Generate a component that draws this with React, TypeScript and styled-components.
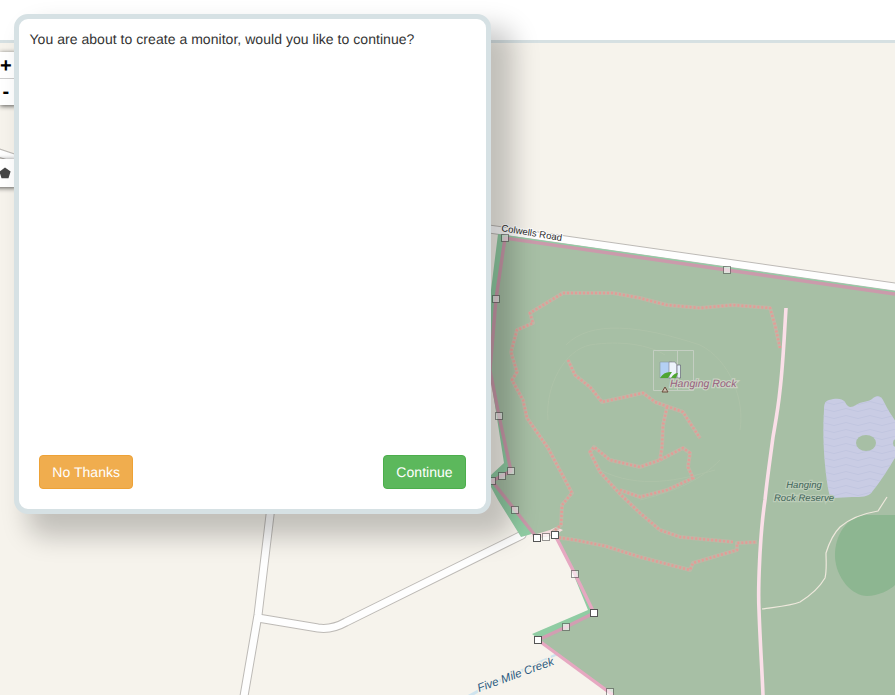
import styled, { createGlobalStyle } from 'styled-components';

const GlobalStyle = createGlobalStyle`
  html, body, #root {
    margin: 0;
    height: 100%;
  }
  body {
    font-family: "Liberation Sans", Arial, sans-serif;
    font-size: 14px;
    line-height: 20px;
    letter-spacing: 0.04px;
    color: #333;
    overflow: hidden;
    text-rendering: geometricPrecision;
  }
`;

type Point = [number, number];

const line = (pts: Point[]) => pts.map(([x, y], i) => `${i ? 'L' : 'M'}${x} ${y}`).join(' ');

const reservePts: Point[] = [
  [498, 234], [895, 291], [895, 695], [614, 695], [532, 634], [588, 610], [570, 566],
  [553, 528], [521, 537], [498, 500], [491, 487], [491, 475], [504, 463], [491, 380], [491, 290],
];

const areaPts: Point[] = [
  [505, 238], [727, 270], [895, 294], [895, 695], [613, 695], [538, 640], [566, 627], [594, 613],
  [575, 574], [555, 535], [537, 538], [515, 510], [492, 481], [511, 471], [499, 416], [490, 370], [496, 299],
];

const trails: Point[][] = [
  [
    [780, 348], [775, 325], [770, 308], [733, 305], [700, 308], [667, 305], [640, 298], [613, 293], [563, 293],
    [530, 313], [533, 323], [517, 330], [511, 352], [517, 372], [512, 380], [523, 400], [527, 418],
    [548, 448], [572, 493], [562, 505], [561, 525], [553, 532],
  ],
  [[555, 537], [575, 540], [605, 546], [640, 557], [690, 570], [693, 563], [737, 550], [737, 543], [757, 542]],
  [[733, 542], [680, 537], [660, 530], [640, 513], [620, 494], [600, 472], [590, 452], [594, 447], [610, 460], [640, 467], [660, 460], [683, 448], [690, 453], [688, 467], [693, 478], [667, 490], [640, 497], [620, 490]],
  [[568, 360], [575, 375], [590, 387], [602, 402], [643, 393], [655, 402], [683, 412], [690, 423], [700, 438]],
  [[667, 407], [663, 425], [662, 447], [660, 460]],
];

const contours: string[] = [
  'M548 420 C545 385 565 350 590 345 C620 340 650 345 665 355',
  'M566 345 C590 320 640 325 700 345 C730 360 745 400 740 430',
  'M600 470 C640 490 680 480 715 470',
  'M640 500 C680 490 700 480 720 460',
];

const roads: string[] = [
  'M-10 150 L14 158',
  'M440 222 L895 287',
  'M276 465 L258 615 L243 702',
  'M258 618 L318 628 Q332 630 346 622 L522 535',
];

const boundaries: { pts: Point[]; color: string }[] = [
  { pts: [[496, 299], [505, 238], [727, 270], [895, 294]], color: '#cb9aab' },
  { pts: [[496, 299], [490, 370], [499, 416], [511, 471], [492, 481], [515, 510], [537, 538]], color: '#cb9aab' },
  { pts: [[555, 535], [575, 574], [594, 613]], color: '#e6a8c1' },
  { pts: [[594, 613], [566, 627], [538, 640]], color: '#d29eb2' },
  { pts: [[538, 640], [613, 695]], color: '#e6a8c1' },
];

const handles: { x: number; y: number; mid: boolean }[] = [
  { x: 505, y: 238, mid: true },
  { x: 727, y: 270, mid: true },
  { x: 496, y: 299, mid: true },
  { x: 499, y: 416, mid: true },
  { x: 511, y: 471, mid: true },
  { x: 502, y: 476, mid: true },
  { x: 492, y: 481, mid: true },
  { x: 515, y: 510, mid: true },
  { x: 537, y: 538, mid: false },
  { x: 546, y: 537, mid: true },
  { x: 555, y: 535, mid: false },
  { x: 575, y: 574, mid: true },
  { x: 594, y: 613, mid: false },
  { x: 566, y: 627, mid: true },
  { x: 538, y: 640, mid: false },
  { x: 610, y: 692, mid: true },
];

const lakePath =
  'M829 400 C836 398 842 398 845 402 C848 408 851 408 856 405 C862 401 868 402 872 399 C877 394 882 396 884 402 C888 410 892 416 896 422 L896 456 C888 470 880 482 872 492 C868 497 862 497 852 497 L834 498 C830 498 829 494 828 488 C825 470 822 440 824 410 C824 404 825 401 829 400 Z';

const MapDrawing = () => (
  <MapSvg viewBox="0 43 895 652" preserveAspectRatio="none">
    <defs>
      <pattern id="lake" width="24" height="7" patternUnits="userSpaceOnUse">
        <path d="M0 4 Q6 1 12 4 T24 4" fill="none" stroke="#c1c5df" strokeWidth="1" />
      </pattern>
    </defs>

    {roads.map((d) => (
      <RoadCasing key={d} d={d} />
    ))}
    {roads.map((d) => (
      <RoadFill key={d} d={d} />
    ))}
    <path d="M462 700 L480 690 L560 653" fill="none" stroke="#cfe4ef" strokeWidth="3" />

    <path d={`${line(reservePts)} Z`} fill="#90cca3" />
    <path d={`${line(areaPts)} Z`} fill="#a7bfa5" />
    <path d="M530 536 L550 530 L556 527 L563 530 L555 535 L537 538 Z" fill="#f4dcdc" />

    <path d={lakePath} fill="#c9cce4" />
    <path d={lakePath} fill="url(#lake)" />
    <ellipse cx="866" cy="443" rx="10" ry="8" fill="#a7bfa5" />
    <ellipse cx="896" cy="443" rx="3" ry="4" fill="#a7bfa5" />
    <path d="M867 515 C848 515 834 535 835 557 C836 578 852 596 867 596 C878 596 890 590 895 585 L895 515 Z" fill="#8db691" />

    {contours.map((d) => (
      <path key={d} d={d} fill="none" stroke="#aec3a9" strokeWidth="1" />
    ))}

    {trails.map((pts) => (
      <g key={pts[0].join()}>
        <path d={line(pts)} fill="none" stroke="#c4b7a8" strokeWidth="4" strokeLinejoin="round" opacity="0.75" />
        <path d={line(pts)} fill="none" stroke="#e39c96" strokeWidth="2.6" strokeDasharray="2 2" />
      </g>
    ))}

    <path
      d="M786 308 C784 340 783 365 780 390 C778 410 775 425 773 437 C770 460 767 480 765 500 C762 520 761 535 760 553 C759 575 758 590 759 610 C760 640 762 670 763 695"
      fill="none"
      stroke="#fadfe8"
      strokeWidth="3.6"
    />
    <path
      d="M762 609 C775 607 790 606 800 602 C808 597 818 590 825 578 C827 570 826 560 826 553 C830 540 835 532 840 527 C848 520 860 514 878 511 L887 497"
      fill="none"
      stroke="#eee8dc"
      strokeWidth="1.2"
    />

    {boundaries.map((b) => (
      <path key={b.pts[0].join()} d={line(b.pts)} fill="none" stroke={b.color} strokeWidth="3.4" strokeLinejoin="round" />
    ))}

    <path d="M653.5 350.5 H693.5 V390.5 H653.5 Z M677.5 350.5 V390.5" fill="none" stroke="#c4cec2" strokeWidth="1" />
    <path d="M660 362 H672 V378 H660 Z" fill="#b4d0f4" stroke="#8a9a9a" strokeWidth="0.6" />
    <path d="M669 362 H675 L677 365 V378 H669 Z" fill="#eef4fc" stroke="#778" strokeWidth="0.6" />
    <path d="M677 365 H680.5 V378 H677 Z" fill="#e6f0fc" stroke="#556" strokeWidth="0.6" />
    <path d="M660 378 Q664 371 672 372 L668 378 Z M671 378 Q674 373 678 373 L676 378 Z" fill="#4fa533" />
    <path d="M665 387 L668 392 H662 Z" fill="#c9bfae" stroke="#6b4d3c" strokeWidth="1" />

    <RoadLabel x="501" y="231" transform="rotate(9.5 501 231)">Colwells Road</RoadLabel>
    <PeakLabel x="670" y="387">Hanging Rock</PeakLabel>
    <ReserveLabel x="804" y="488">Hanging</ReserveLabel>
    <ReserveLabel x="804" y="501">Rock Reserve</ReserveLabel>
    <CreekLabel x="479" y="692" transform="rotate(-20 479 692)">Five Mile Creek</CreekLabel>

    {handles.map((h) => (
      <Handle key={`${h.x}-${h.y}`} x={h.x - 3.5} y={h.y - 3.5} width="7" height="7" $mid={h.mid} />
    ))}
  </MapSvg>
);

export default function App() {
  return (
    <>
      <GlobalStyle />
      <Page>
        <Header />
        <MapPane>
          <MapDrawing />
          <ZoomControl>
            <ZoomButton>+</ZoomButton>
            <ZoomButton>-</ZoomButton>
          </ZoomControl>
          <DrawControl>
            <svg width="12" height="12" viewBox="0 0 12 12">
              <path d="M6 0.5 L11.6 4.6 L9.5 11.2 H2.5 L0.4 4.6 Z" fill="#464646" />
            </svg>
          </DrawControl>
        </MapPane>
        <Modal>
          <Message>You are about to create a monitor, would you like to continue?</Message>
          <Footer>
            <ActionButton $tone="warning">No Thanks</ActionButton>
            <ActionButton $tone="success">Continue</ActionButton>
          </Footer>
        </Modal>
      </Page>
    </>
  );
}

const Page = styled.div`
  position: relative;
  display: flex;
  flex-direction: column;
  height: 100vh;
  overflow: hidden;
  background: #f6f3ec;
`;

const Header = styled.header`
  flex: 0 0 40px;
  background: #fff;
  border-bottom: 3px solid #d6e0e2;
`;

const MapPane = styled.main`
  position: relative;
  flex: 1;
  min-height: 0;
`;

const MapSvg = styled.svg`
  display: block;
  width: 100%;
  height: 100%;
`;

const RoadCasing = styled.path`
  fill: none;
  stroke: #bdbab6;
  stroke-width: 9px;
  stroke-linecap: round;
  stroke-linejoin: round;
`;

const RoadFill = styled.path`
  fill: none;
  stroke: #fefefe;
  stroke-width: 7px;
  stroke-linecap: round;
  stroke-linejoin: round;
`;

const RoadLabel = styled.text`
  font: 9.5px "Liberation Sans", Arial, sans-serif;
  fill: #2c2c2c;
  paint-order: stroke;
  stroke: #fff;
  stroke-width: 2px;
`;

const PeakLabel = styled.text`
  font: italic 10.5px "Liberation Sans", Arial, sans-serif;
  fill: #98607e;
  paint-order: stroke;
  stroke: #c9d3c3;
  stroke-width: 2.5px;
`;

const ReserveLabel = styled.text`
  font: italic 9.5px "Liberation Sans", Arial, sans-serif;
  fill: #3f6458;
  text-anchor: middle;
  paint-order: stroke;
  stroke: #bccdb8;
  stroke-width: 2.5px;
`;

const CreekLabel = styled.text`
  font: italic 11.5px "Liberation Sans", Arial, sans-serif;
  fill: #2a5a80;
  paint-order: stroke;
  stroke: #f6f3ec;
  stroke-width: 3px;
`;

const Handle = styled.rect<{ $mid: boolean }>`
  fill: #fff;
  stroke: #555;
  stroke-width: 1px;
  opacity: ${(p) => (p.$mid ? 0.6 : 1)};
`;

const ZoomControl = styled.div`
  position: absolute;
  left: 0;
  top: 9px;
  box-sizing: border-box;
  width: 18px;
  padding-right: 6.3px;
  background: #fff;
  border-radius: 0 4px 4px 0;
  box-shadow: 0 1px 5px rgba(0, 0, 0, 0.65);
`;

const ZoomButton = styled.div`
  box-sizing: border-box;
  height: 26px;
  padding-top: 2px;
  display: flex;
  align-items: center;
  justify-content: center;
  font: bold 20px "Liberation Sans", Arial, sans-serif;
  color: #000;

  & + & {
    height: 27px;
    position: relative;
  }

  & + &::before {
    content: '';
    position: absolute;
    left: 0;
    top: 0;
    width: 18px;
    border-top: 1px solid #ccc;
  }
`;

const DrawControl = styled.div`
  position: absolute;
  left: -8px;
  top: 116px;
  width: 26px;
  height: 28px;
  display: flex;
  align-items: center;
  justify-content: center;
  background: #fff;
  border-radius: 4px;
  box-shadow: 0 1px 5px rgba(0, 0, 0, 0.65);
`;

const Modal = styled.div`
  position: absolute;
  left: 14px;
  top: 14px;
  box-sizing: border-box;
  width: 477px;
  height: 500px;
  display: flex;
  flex-direction: column;
  padding: 10px 20px 20px 10.5px;
  background: #fff;
  border: 5px solid #d6e1e4;
  border-radius: 14px;
  box-shadow: 18px 18px 26px 5px rgba(0, 0, 0, 0.21);
`;

const Message = styled.p`
  flex: 1;
  margin: 0;
`;

const Footer = styled.div`
  display: flex;
  justify-content: space-between;
  margin-left: 9.5px;
`;

const toneColors = {
  warning: { bg: '#f0ad4e', border: '#eea236' },
  success: { bg: '#5cb85c', border: '#4cae4c' },
};

const ActionButton = styled.button<{ $tone: 'warning' | 'success' }>`
  padding: 6px 12.3px;
  font: 14px/20px "Liberation Sans", Arial, sans-serif;
  letter-spacing: 0.04px;
  text-rendering: geometricPrecision;
  color: #fff;
  background: ${(p) => toneColors[p.$tone].bg};
  border: 1px solid ${(p) => toneColors[p.$tone].border};
  border-radius: 4px;
`;
